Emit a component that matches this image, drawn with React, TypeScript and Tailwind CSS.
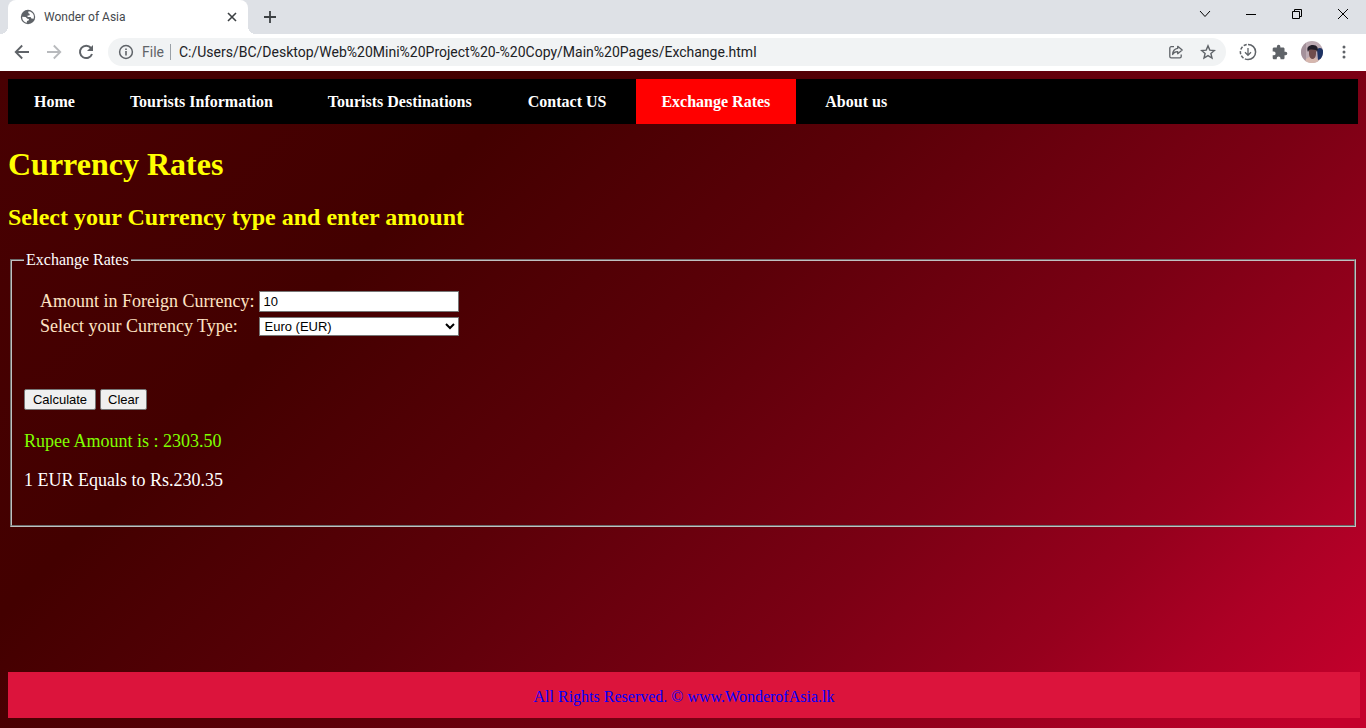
import { useState } from "react";
import type { FormEvent, ReactNode } from "react";

const RATES: Record<string, number> = { EUR: 230.35, USD: 200.5, GBP: 272.1 };

const LINKS = [
  { label: "Home", pad: "pl-[26px] pr-[27px]" },
  { label: "Tourists Information", pad: "px-7" },
  { label: "Tourists Destinations", pad: "pl-[27px] pr-7" },
  { label: "Contact US", pad: "pl-7 pr-[30px]" },
  { label: "Exchange Rates", pad: "pl-[25px] pr-[26px] bg-[#ff0000]" },
  { label: "About us", pad: "pl-[29px] pr-7" },
];

function IconButton({ label, className = "", children }: { label: string; className?: string; children: ReactNode }) {
  return (
    <button type="button" aria-label={label} className={`flex h-8 shrink-0 items-center justify-center ${className}`}>
      {children}
    </button>
  );
}

function TabStrip() {
  return (
    <div className="flex h-[34px] bg-[#dee1e6]">
      <div className="relative ml-2 flex w-60 items-center rounded-t-lg bg-white pl-3 pr-2">
        <span className="absolute -left-2 bottom-0 size-2 bg-[radial-gradient(circle_at_0_0,#dee1e6_8px,#ffffff_8px)]" />
        <span className="absolute -right-2 bottom-0 size-2 bg-[radial-gradient(circle_at_100%_0,#dee1e6_8px,#ffffff_8px)]" />
        <svg viewBox="0 0 16 16" className="size-4">
          <circle cx="8" cy="8" r="7.2" fill="#5f6368" />
          <path d="M8.6 2.2 8.2 4.1 9.8 5 9.4 6.4 7.6 6.6 7.5 7.9 10.6 8 11.4 9.6 13.6 9.8C14.3 7.5 13.9 5.6 12.6 4.2 11.4 2.9 10 2.3 8.6 2.2ZM2.2 7.7 5.6 8 7.4 9.8 9 10 8.6 11.6 7 12 6.8 13.7C4.2 13.3 2.1 10.9 2.2 7.7Z" fill="#fff" />
        </svg>
        <span className="ml-2 flex-1 text-xs text-[#45494d]">Wonder of Asia</span>
        <IconButton label="Close tab" className="w-4">
          <svg viewBox="0 0 16 16" className="size-4" fill="none" stroke="#3c4043" strokeWidth="1.6"><path d="m4 4 8 8m0-8-8 8" /></svg>
        </IconButton>
      </div>
      <IconButton label="New tab" className="ml-3.5 w-4">
        <svg viewBox="0 0 16 16" className="size-4" fill="none" stroke="#3c4043" strokeWidth="1.8"><path d="M2 9h12M8 3v12" /></svg>
      </IconButton>
      <div className="ml-auto flex h-7 items-center pr-[17px] text-black">
        <IconButton label="Search tabs" className="mr-[34px] w-3">
          <svg viewBox="0 0 12 12" className="size-3" fill="none" stroke="currentColor"><path d="m1 3 5 5.5L11 3" /></svg>
        </IconButton>
        <IconButton label="Minimize" className="mr-[34px] w-3">
          <svg viewBox="0 0 12 12" className="size-3" fill="none" stroke="currentColor"><path d="M1 6.5h10" /></svg>
        </IconButton>
        <IconButton label="Restore" className="mr-[34px] w-3">
          <svg viewBox="0 0 12 12" className="size-3" fill="none" stroke="currentColor"><path d="M1.5 3.5h7v7h-7zM3.5 3V1.5h7v7H9" /></svg>
        </IconButton>
        <IconButton label="Close window" className="w-3">
          <svg viewBox="0 0 12 12" className="size-3" fill="none" stroke="currentColor"><path d="m1 1 10 10m0-10L1 11" /></svg>
        </IconButton>
      </div>
    </div>
  );
}

function Toolbar() {
  return (
    <div className="flex h-[37px] items-center bg-white pb-px pl-3.5 pr-3 text-[#5f6368]">
      <IconButton label="Back" className="w-4">
        <svg viewBox="0 0 16 16" className="size-4" fill="none" stroke="currentColor" strokeWidth="1.8"><path d="M15 8H2.5M8.2 1.5 1.7 8l6.5 6.5" /></svg>
      </IconButton>
      <IconButton label="Forward" className="ml-4 w-4 text-[#b8babd]">
        <svg viewBox="0 0 16 16" className="size-4" fill="none" stroke="currentColor" strokeWidth="1.8"><path d="M1 8h12.5M7.8 1.5 14.3 8l-6.5 6.5" /></svg>
      </IconButton>
      <IconButton label="Reload" className="ml-4 w-4">
        <svg viewBox="0 0 16 16" className="size-4"><path fill="none" stroke="currentColor" strokeWidth="2" d="M13 4A6.2 6.2 0 1 0 14 10" /><path fill="currentColor" d="M15 1v6H9z" /></svg>
      </IconButton>
      <div className="ml-3.5 flex h-7 flex-1 items-center rounded-full bg-[#f1f3f4] pl-2.5 pr-2.5">
        <svg viewBox="0 0 16 16" className="size-4"><circle cx="8" cy="8" r="6.4" fill="none" stroke="currentColor" strokeWidth="1.5" /><path d="M7.2 7h1.6v4.5H7.2zM7.2 4.4h1.6V6H7.2z" fill="currentColor" /></svg>
        <span className="ml-2 text-sm">File</span>
        <span className="ml-1.5 h-4 w-px bg-[#9aa0a6]" />
        <input aria-label="Address" defaultValue="C:/Users/BC/Desktop/Web%20Mini%20Project%20-%20Copy/Main%20Pages/Exchange.html" className="ml-2 min-w-0 flex-1 bg-transparent text-sm text-[#202124] outline-none" />
        <IconButton label="Share" className="w-4">
          <svg viewBox="0 0 16 16" className="size-4" fill="none" stroke="currentColor" strokeWidth="1.3" strokeLinejoin="round"><path d="M6 2.7H3.2a1.4 1.4 0 0 0-1.4 1.4v8.3a1.4 1.4 0 0 0 1.4 1.4h8.6a1.4 1.4 0 0 0 1.4-1.4v-2" /><path d="M9.7 2.3 14.2 6l-4.5 3.7V7.6C7.2 7.5 5.6 8.5 4.6 10.5c.2-3.3 2-5.7 5.1-6.1z" /></svg>
        </IconButton>
        <IconButton label="Bookmark" className="ml-4 w-4">
          <svg viewBox="0 0 16 16" className="size-4" fill="none" stroke="currentColor" strokeWidth="1.4"><path d="m8 1.9 1.8 4.2 4.6.4-3.5 3 1.1 4.5L8 11.6 4 14l1.1-4.5-3.5-3 4.6-.4z" /></svg>
        </IconButton>
      </div>
      <IconButton label="Downloads" className="ml-3 w-5">
        <svg viewBox="0 0 18 18" className="size-[18px]" fill="none" stroke="currentColor" strokeWidth="1.5"><path d="M9 1.4a7.6 7.6 0 0 1 0 15.2" /><path d="M9 16.6A7.6 7.6 0 0 1 9 1.4" strokeDasharray="3.2 1.6" /><path d="M9 5v7M6 9.3l3 3 3-3" strokeWidth="1.3" /></svg>
      </IconButton>
      <IconButton label="Extensions" className="ml-3.5 w-4">
        <svg viewBox="1 0 23 23" className="size-4" fill="currentColor"><path d="M20.5 11H19V7c0-1.1-.9-2-2-2h-4V3.500a2.500 2.500 0 0 0-5 0V5H4c-1.100 0-2 .9-2 2v3.800h1.500a2.700 2.700 0 0 1 0 5.400H2V20c0 1.100.9 2 2 2h3.800v-1.500a2.700 2.700 0 0 1 5.400 0V22H17c1.100 0 2-.9 2-2v-4h1.500a2.500 2.500 0 0 0 0-5z" /></svg>
      </IconButton>
      <IconButton label="Profile" className="ml-[13px] w-[22px]">
        <svg viewBox="0 0 22 22" className="size-[22px] rounded-full">
          <path fill="#bdabb3" d="M0 0h22v22H0z" /><path fill="#8b7784" d="M0 0h5v22H0z" opacity=".5" />
          <path fill="#1d3263" d="M16 8c3-2 5-1 6 1v8l-5 2z" />
          <path fill="#d6b7ae" d="M4 22c0-5 3-6 7-6s6 2 7 6z" />
          <path fill="#6f4c4c" d="M8 7h7v6c0 3-2 5-3.500 5S8 16 8 13z" />
          <path fill="#211d28" d="M7 11C5 6 8 4 12 4s6 3 4 7l-1-2c-2 0-4-1-7 0z" />
        </svg>
      </IconButton>
      <IconButton label="Menu" className="ml-[11px] w-5">
        <svg viewBox="0 0 16 16" className="size-4" fill="currentColor"><circle cx="8" cy="3" r="1.5" /><circle cx="8" cy="8" r="1.5" /><circle cx="8" cy="13" r="1.5" /></svg>
      </IconButton>
    </div>
  );
}

export default function App() {
  const [amount, setAmount] = useState("10");
  const [currency, setCurrency] = useState("EUR");
  const [result, setResult] = useState<{ amount: number; currency: string } | null>({ amount: 10, currency: "EUR" });

  const calculate = (event: FormEvent) => {
    event.preventDefault();
    setResult({ amount: Number(amount), currency });
  };
  const clear = () => {
    setAmount("");
    setResult(null);
  };

  return (
    <div className="flex min-h-screen flex-col">
      <header className="font-[Roboto,sans-serif]">
        <TabStrip />
        <Toolbar />
      </header>
      <div className="flex flex-1 flex-col bg-[linear-gradient(135deg,#480002_0%,#430000_27%,#5b0008_47%,#7b0014_67%,#96001d_80%,#ac0025_88%,#c4002c_98%)] px-2 pt-2 pb-2.5 font-['Liberation_Serif',serif] text-white">
        <nav className="flex h-[45px] bg-black">
          {LINKS.map((link) => (
            <a key={link.label} href="#" className={`flex items-center font-bold ${link.pad}`}>
              {link.label}
            </a>
          ))}
        </nav>
        <main className="flex-1">
          <h1 className="mt-[22px] text-[32px] leading-9 font-bold text-[#ffff00]">Currency Rates</h1>
          <h2 className="mt-[21px] text-2xl leading-7 font-bold text-[#ffff00]">Select your Currency type and enter amount</h2>
          <form onSubmit={calculate}>
            <fieldset className="mx-0.5 mt-5 border-2 border-[#c0c0c0] [border-style:groove] px-3 pb-[34px]">
              <legend className="px-0.5 leading-[18px]">Exchange Rates</legend>
              <div className="ml-4 mt-[22px] grid w-fit grid-cols-[auto_200px] items-center gap-x-[5px] gap-y-1 text-lg leading-[21px] text-[#ffe4c4]">
                <label htmlFor="amount">Amount in Foreign Currency:</label>
                <input id="amount" value={amount} onChange={(e) => setAmount(e.target.value)} className="h-[21px] border border-[#767676] bg-white px-[3px] font-['Liberation_Sans',sans-serif] text-[13px] leading-4 text-black" />
                <label htmlFor="currency">Select your Currency Type:</label>
                <select id="currency" value={currency} onChange={(e) => setCurrency(e.target.value)} className="h-[19px] border border-[#767676] bg-white font-['Liberation_Sans',sans-serif] text-[13px] leading-4 text-black [appearance:auto]">
                  <option value="EUR">Euro (EUR)</option>
                  <option value="USD">US Dollar (USD)</option>
                  <option value="GBP">Pound (GBP)</option>
                </select>
              </div>
              <div className="mt-[52px] flex gap-1 font-['Liberation_Sans',sans-serif] text-[13px] leading-4 text-black">
                <button type="submit" className="h-[21px] w-[72px] rounded-[2px] border border-[#767676] bg-[#efefef]">Calculate</button>
                <button type="button" onClick={clear} className="h-[21px] rounded-[2px] border border-[#767676] bg-[#efefef] px-[7px]">Clear</button>
              </div>
              <div className="mt-[21px] flex min-h-[60px] flex-col gap-[18px] text-lg leading-[21px]">
                {result && (
                  <>
                    <p className="text-[#7fff00]">Rupee Amount is : {(result.amount * RATES[result.currency]).toFixed(2)}</p>
                    <p>1 {result.currency} Equals to Rs.{RATES[result.currency]}</p>
                  </>
                )}
              </div>
            </fieldset>
          </form>
        </main>
        <footer className="-mr-0.5 flex h-[46px] items-center justify-center bg-[#dc143c] pt-1 text-[#0000ff]">
          All Rights Reserved. © www.WonderofAsia.lk
        </footer>
      </div>
    </div>
  );
}
